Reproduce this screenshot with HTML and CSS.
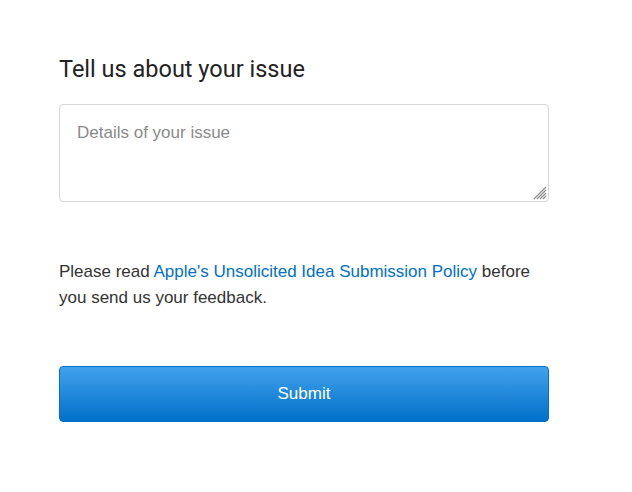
FILE: index.html
```html
<!DOCTYPE html>
<html>
<head>
<meta charset="utf-8">
<link rel="stylesheet" href="styles.css">
</head>
<body>
<main class="form">
  <h2 class="title">Tell us about your issue</h2>
  <div class="field">
    <textarea class="details" placeholder="Details of your issue"></textarea>
    <svg class="grip" width="14" height="14" viewBox="0 0 14 14" aria-hidden="true">
      <path d="M1 13L13 1M4 13L13 4M7 13L13 7M10 13L13 10" stroke="#8c8c8c" stroke-width="1.2" fill="none"/>
    </svg>
  </div>
  <p class="policy">Please read <a class="link" href="#">Apple's Unsolicited Idea Submission Policy</a> before you send us your feedback.</p>
  <button class="submit" type="button">Submit</button>
</main>
</body>
</html>
```
FILE: styles.css
```css
html, body {
  margin: 0;
  padding: 0;
  background: #fff;
}
body {
  font-family: "Liberation Sans", Arial, sans-serif;
  color: #333;
}
.form {
  width: 490px;
  margin-left: 59px;
  padding-top: 53px;
  display: flex;
  flex-direction: column;
}
.title {
  margin: 0;
  font-family: Roboto, "Liberation Sans", sans-serif;
  font-weight: 400;
  font-size: 23.5px;
  line-height: 32px;
  color: #222;
}
.field {
  position: relative;
  margin-top: 19px;
  height: 98px;
}
.details {
  display: block;
  width: 100%;
  height: 98px;
  box-sizing: border-box;
  border: 1px solid #d6d6d6;
  border-radius: 4px;
  padding: 16px 17px;
  font-family: "Liberation Sans", Arial, sans-serif;
  font-size: 17px;
  line-height: 24px;
  color: #333;
  resize: none;
  outline: none;
}
.details::placeholder {
  color: #8a8a8a;
}
.grip {
  position: absolute;
  right: 2px;
  bottom: 2px;
}
.policy {
  margin: 57px 0 0;
  font-size: 17px;
  line-height: 26px;
  color: #333;
}
.link {
  color: #0070c9;
  text-decoration: none;
}
.submit {
  margin-top: 55px;
  height: 56px;
  border: 1px solid #0071c9;
  border-radius: 4px;
  background: linear-gradient(#42a1ec, #0070c9);
  color: #fff;
  font-family: "Liberation Sans", Arial, sans-serif;
  font-size: 17px;
  cursor: pointer;
}
```
